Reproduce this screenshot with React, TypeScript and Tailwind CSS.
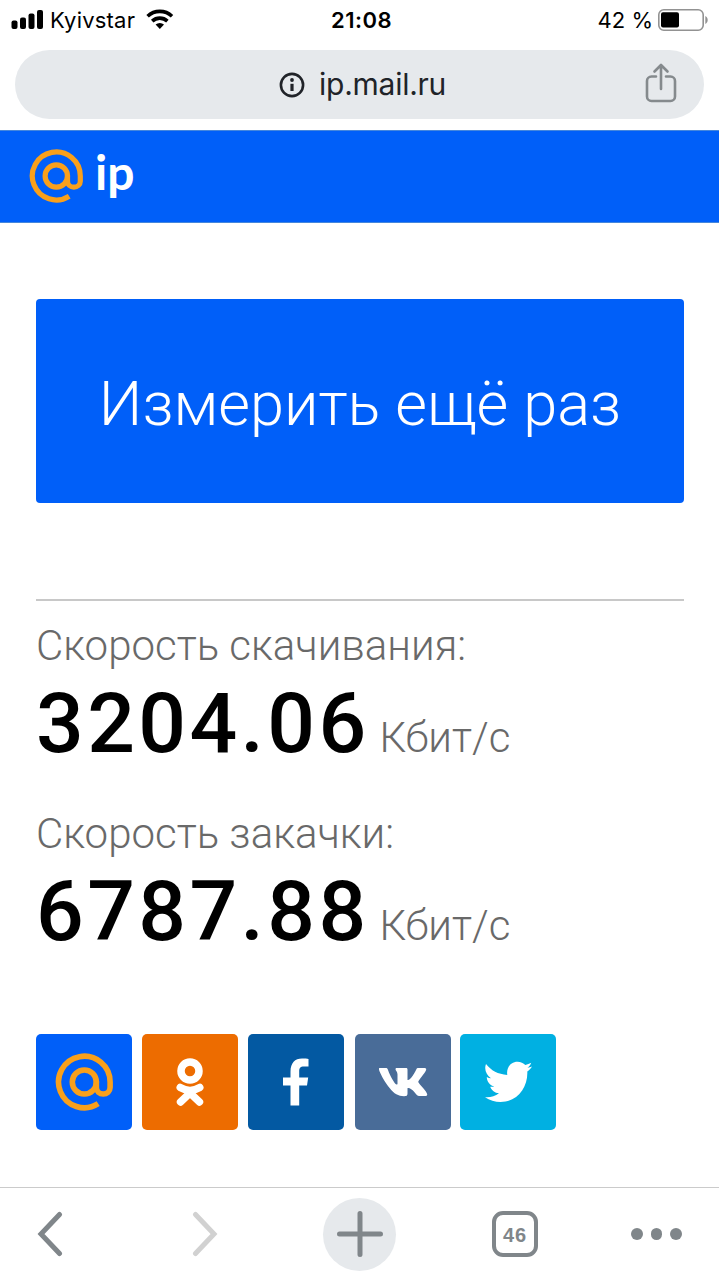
import type { ReactNode } from "react";

function MailLogo({ className }: { className: string }) {
  return (
    <svg className={className} viewBox="0 0 54 54" fill="none" stroke="#f9a01b" strokeWidth="5.2">
      <circle cx="27.3" cy="27" r="11.2" />
      <path d="M38.5 26v6.2a6.4 6 0 0 0 12.800 0V27A24 24 0 1 0 40.2 47.2" />
    </svg>
  );
}

function StatusBar() {
  return (
    <div className="grid h-[50px] grid-cols-3 items-start text-[22px] text-black">
      <div className="flex pt-[7px] pl-[11px]">
        <svg className="mt-[3px] h-[19px] w-[33px]" viewBox="0 0 33 19">
          <rect x="0.5" y="10.5" width="6" height="8.5" rx="2" />
          <rect x="9" y="7.5" width="6" height="11.5" rx="2" />
          <rect x="17.5" y="3.5" width="6" height="15.5" rx="2" />
          <rect x="26" y="0" width="6" height="19" rx="2" />
        </svg>
        <span className="ml-[6px] h-[26px] text-[22px] leading-[26px] tracking-[0.2px]">Kyivstar</span>
        <svg className="mt-[2px] ml-[11px] h-[20px] w-[28px]" viewBox="0 0 28 20" fill="none" stroke="#000" strokeWidth="3.6">
          <path d="M1.6 7.2C8.4.8 19.2.8 26 7.2" />
          <path d="M6.2 12.1c4.3-4 10.9-4 15.2 0" />
          <path d="M9.6 15.6a6.3 6.3 0 0 1 8.4 0L13.8 20z" fill="#000" stroke="none" />
        </svg>
      </div>
      <div className="pt-[7px] pl-[4px] text-center text-[22px] leading-[26px] font-semibold tracking-[0.5px]">21:08</div>
      <div className="flex justify-end pt-[7px] pr-[11px]">
        <span className="mr-[5px] leading-[26px] whitespace-nowrap">42 %</span>
        <svg className="mt-[2px] h-[22px] w-[50px]" viewBox="0 0 50 22">
          <rect x="0.8" y="0.8" width="44.4" height="20.4" rx="5" fill="none" stroke="#929292" strokeWidth="1.6" />
          <rect x="3" y="3.3" width="18" height="15.2" rx="2" fill="#000" />
          <path d="M47.3 7c3.2 1.5 3.2 6.5 0 8z" fill="#929292" />
        </svg>
      </div>
    </div>
  );
}

function AddressBar() {
  return (
    <div className="mx-[15px] flex h-[69px] items-center rounded-full bg-[#e6e9ec] pr-[27px] pl-[264px] text-[#202328]">
      <svg className="h-[26px] w-[26px]" viewBox="0 0 26 26">
        <circle cx="13" cy="13" r="11.1" fill="none" stroke="currentColor" strokeWidth="2.6" />
        <circle cx="13" cy="8" r="1.9" fill="currentColor" />
        <path d="M11.4 11.8h3.2V19h-3.2z" fill="currentColor" />
      </svg>
      <span className="mb-[2px] ml-[14px] text-[30px] leading-[36px] tracking-[-0.25px]">ip.mail.ru</span>
      <svg className="mt-[-4px] ml-auto h-[40px] w-[32px]" viewBox="0 0 32 40" fill="none" stroke="#858a8d" strokeWidth="2.6" strokeLinecap="round" strokeLinejoin="round">
        <path d="M11 13.5H6.5A4.5 4.5 0 0 0 2 18v15.5A4.5 4.5 0 0 0 6.5 38h19a4.5 4.5 0 0 0 4.5-4.5V18a4.5 4.5 0 0 0-4.5-4.500H21" />
        <path d="M16 26V2.500M9.500 8.500L16 2l6.500 6.500" />
      </svg>
    </div>
  );
}

function Speed({ label, value }: { label: string; value: string }) {
  return (
    <div className="h-[188px] whitespace-nowrap text-[#696969]">
      <div className="text-[42px] leading-[50px] font-light">{label}</div>
      <div className="mt-[3px] flex items-baseline">
        <span className="text-[84px] leading-[100px] font-medium tracking-[3.400px] text-black">{value}</span>
        <span className="ml-[10px] text-[42px] font-light">Кбит/с</span>
      </div>
    </div>
  );
}

function Tile({ className, children }: { className: string; children: ReactNode }) {
  return <div className={`flex h-24 w-24 items-center justify-center rounded-[5px] ${className}`}>{children}</div>;
}

function ShareTiles() {
  return (
    <div className="flex gap-[10px]">
      <Tile className="bg-[#005ff9]">
        <MailLogo className="h-[58px] w-[58px]" />
      </Tile>
      <Tile className="bg-[#ed6c00]">
        <svg className="h-[50px] w-[28px]" viewBox="0 0 28 50" fill="none" stroke="#fff" strokeLinecap="round">
          <circle cx="14" cy="14" r="9" strokeWidth="7.500" />
          <path d="M4.200 30.500q9.800 5.800 19.600 0M14 36L4.500 45M14 36L23.500 45" strokeWidth="7.400" />
        </svg>
      </Tile>
      <Tile className="bg-[#0359a2]">
        <svg className="h-[50px] w-[28px]" viewBox="0 0 28 50" fill="#fff">
          <path d="M8.500 48.500V28.500H1V20.500H8.500V14.500C8.500 6 13 1.500 20 1.500c3 0 5 .1 6.500.4V9.500H22c-4 0-4.800 1.700-4.800 4.700v6.300h9l-1.200 8h-7.800v20z" />
        </svg>
      </Tile>
      <Tile className="ml-px bg-[#496c98]">
        <svg className="h-[30px] w-[50px]" viewBox="0 0 50 30" fill="#fff">
          <path d="M1.700 1H7.800c1.300 0 1.700.6 2.200 1.900C12.400 9.400 16 15.500 18.300 17.500L19.500 17.200V7.500C19.500 4.500 17.500 3.500 17.500 2.200C17.500 1.400 18 1 18.800 1H28c1.200 0 1.500.6 1.500 1.800V13C31 13.500 33 11 34.500 9C37 5.500 38 3 38.500 2C38.900 1.200 39.300 1 40.300 1H46.500c1.800 0 2 1 1.500 2.200C46.500 6.700 41 12.500 40.300 14.500C39.900 15.800 43.500 19 45.500 21.400C47.500 23.800 49 25.800 49.200 27.200C49.400 28.400 48.600 29 47.400 29H41c-1.500 0-2-.7-4.300-3.500C34 22.500 31 20.500 29.500 21.300V26.500C29.500 28.700 28.700 29.200 26 29.200C20.500 29.200 15.800 26.500 12 21.500C6.500 15 1.500 5.500 1 2.500C.8 1.500 1 1 1.700 1z" />
        </svg>
      </Tile>
      <Tile className="ml-[-1px] bg-[#00b0e2]">
        <svg className="h-[42px] w-[48px]" viewBox="0 0 48 42" fill="#fff">
          <path d="M2 3C7 9.500 14 13.200 23.300 14C22 6.500 27 .8 33.500.8C36.800.8 39.400 2.200 41.300 4.100C43.500 3.600 45.500 2.800 47.200 1.800C46.500 4 45.300 5.500 43.500 6.800C45.300 6.600 46.700 6.200 48 5.500C46.800 7.600 45.200 9 43.300 10.500C44 26 33.500 41 16.500 41C11 41 5.500 39.400 1 36.300C6.300 36.700 11 35.500 15 32.300C10.800 31.900 7.600 29.400 6.200 25.700C7.600 26 9 25.900 10.300 25.500C5.900 24.300 2.800 20.800 2.800 16C4 16.800 5.500 17.200 7 17.200C2.500 13.800-.2 8.500 2 3z" />
        </svg>
      </Tile>
    </div>
  );
}

function BrowserToolbar() {
  return (
    <div className="flex h-[93px] items-center border-t-[1.500px] border-[#cbcbcb] bg-white text-[#80868a]">
      <svg className="ml-[37px] h-[46px] w-[27px]" viewBox="0 0 27 46" fill="none" stroke="currentColor" strokeWidth="5" strokeLinecap="round" strokeLinejoin="miter">
        <path d="M22.500 3.500L4 23l18.500 19.500" />
      </svg>
      <svg className="ml-[127px] h-[46px] w-[27px]" viewBox="0 0 27 46" fill="none" stroke="#d1d1d1" strokeWidth="5" strokeLinecap="round">
        <path d="M4.500 3.500L23 23L4.500 42.500" />
      </svg>
      <div className="ml-[105px] flex h-[73px] w-[73px] items-center justify-center rounded-full bg-[#e6e9ec]">
        <svg className="h-[46px] w-[46px]" viewBox="0 0 46 46" fill="none" stroke="currentColor" strokeWidth="5" strokeLinecap="round">
          <path d="M23 2.500v41M2.500 23h41" />
        </svg>
      </div>
      <div className="ml-[96px] flex h-[46px] w-[46px] items-center justify-center rounded-[11px] border-[4.500px] border-[#80868a] pt-px font-['Liberation_Sans',sans-serif] text-[20px] font-bold tracking-[1px]">46</div>
      <div className="ml-[93px] flex gap-2">
        <i className="h-[11.500px] w-[11.500px] rounded-full bg-[#80868a]" />
        <i className="h-[11.500px] w-[11.500px] rounded-full bg-[#80868a]" />
        <i className="h-[11.500px] w-[11.500px] rounded-full bg-[#80868a]" />
      </div>
    </div>
  );
}

export default function App() {
  return (
    <div className="flex h-[1280px] w-[719px] flex-col overflow-hidden bg-white font-['Inter',sans-serif]">
      <StatusBar />
      <AddressBar />
      <header className="mt-[11px] flex h-[93px] shrink-0 items-start border-y border-[#4587dc] bg-[#005ff9] pt-[18px] pl-[29px]">
        <MailLogo className="h-[54px] w-[54px]" />
        <span className="mt-[-7px] ml-[12px] font-['Lato'] text-[48px] leading-[60px] font-bold text-white">ip</span>
      </header>
      <main className="flex-1 px-9 pt-[76px] font-['Roboto',sans-serif]">
        <button className="block h-[204px] w-[648px] rounded-[4px] bg-[#005ff9] pt-[5px] text-center text-[61.300px] leading-[74px] font-light whitespace-nowrap text-white">
          Измерить ещё раз
        </button>
        <div className="mt-[96px] w-[648px] border-t-2 border-[#c8c8c8] pt-[20px]">
          <Speed label="Скорость скачивания:" value="3204.06" />
          <Speed label="Скорость закачки:" value="6787.88" />
        </div>
        <div className="mt-[37px]">
          <ShareTiles />
        </div>
      </main>
      <BrowserToolbar />
    </div>
  );
}
